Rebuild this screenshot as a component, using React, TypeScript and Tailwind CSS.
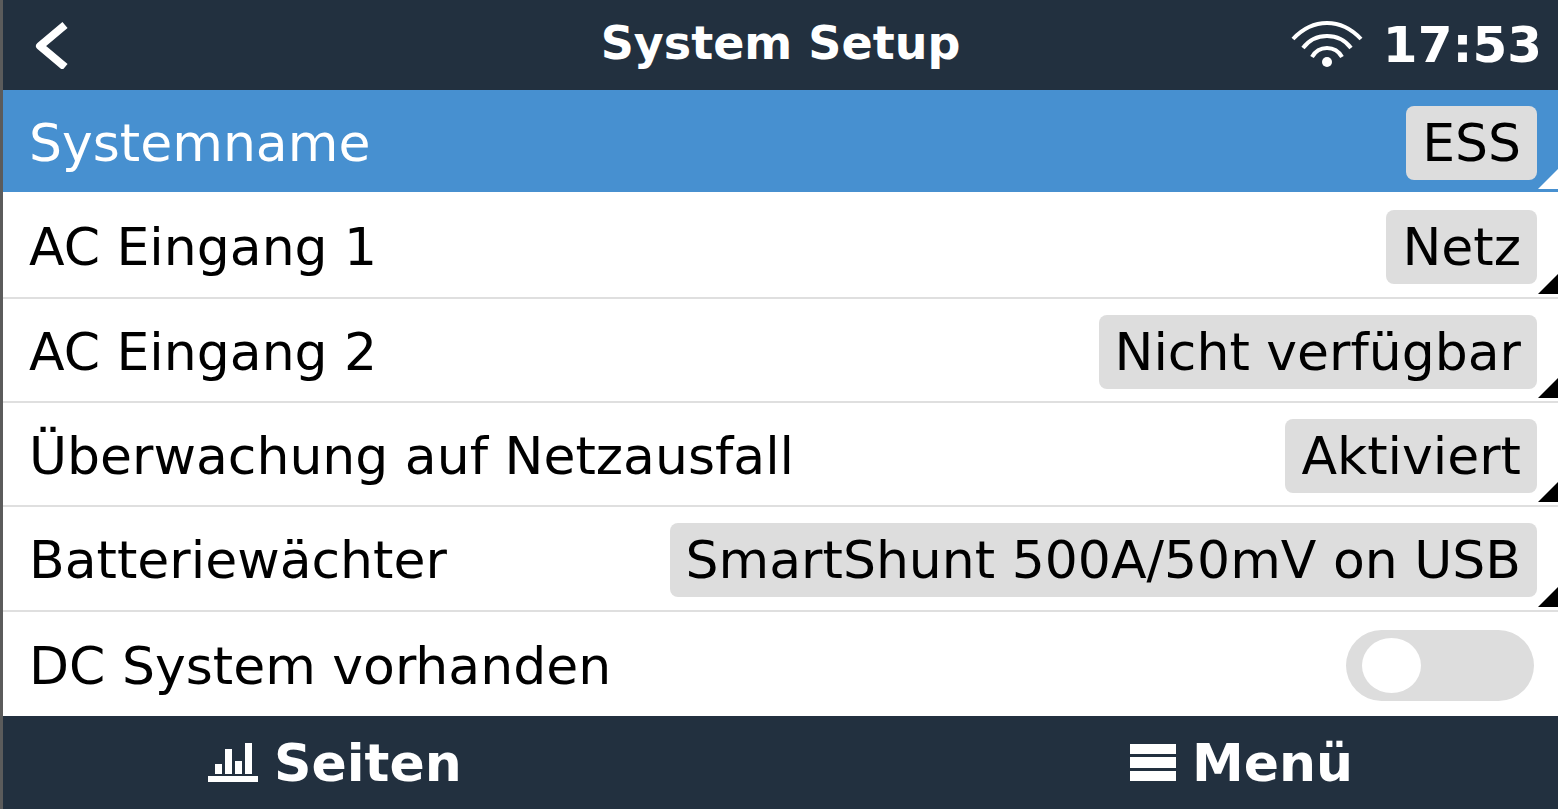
import { useState } from 'react'
import clsx from 'clsx'

type Item = { label: string; value: string }

const items: Item[] = [
  { label: 'Systemname', value: 'ESS' },
  { label: 'AC Eingang 1', value: 'Netz' },
  { label: 'AC Eingang 2', value: 'Nicht verfügbar' },
  { label: 'Überwachung auf Netzausfall', value: 'Aktiviert' },
  { label: 'Batteriewächter', value: 'SmartShunt 500A/50mV on USB' },
]

function BackIcon() {
  return (
    <svg width="38" height="48" viewBox="0 0 38 48" fill="none" stroke="white" strokeWidth="8">
      <path d="M34 4 L9 25 L34 46" strokeLinejoin="round" />
    </svg>
  )
}

function WifiIcon() {
  return (
    <svg width="72" height="48" viewBox="0 0 72 48" fill="none" stroke="white" strokeWidth="4">
      <path d="M2 18 Q17 2 36 2 Q55 2 70 18" />
      <path d="M12 27 Q21 15 36 15 Q51 15 60 27" />
      <path d="M21 36 Q26 27 36 27 Q46 27 51 36" />
      <circle cx="36" cy="41" r="5" fill="white" stroke="none" />
    </svg>
  )
}

function PagesIcon() {
  return (
    <svg width="50" height="40" viewBox="0 0 50 40" fill="white">
      <rect x="7" y="21" width="7" height="10" />
      <rect x="17" y="6" width="7" height="25" />
      <rect x="27" y="18" width="7" height="13" />
      <rect x="37" y="0" width="7" height="31" />
      <rect x="0" y="33" width="50" height="6" />
    </svg>
  )
}

function MenuIcon() {
  return (
    <svg width="46" height="37" viewBox="0 0 46 37" fill="white">
      <rect y="0" width="46" height="10" />
      <rect y="13" width="46" height="11" />
      <rect y="27" width="46" height="10" />
    </svg>
  )
}

function MenuRow({ item, active, onSelect }: { item: Item; active: boolean; onSelect: () => void }) {
  return (
    <button
      type="button"
      onClick={onSelect}
      className={clsx(
        'relative flex items-center justify-between border-b-2 pt-1 pl-[26px] pr-[21px] text-left',
        active ? 'border-white bg-[#4790d0] text-white' : 'border-[#dfdfdf] bg-white text-black'
      )}
    >
      <span>{item.label}</span>
      <span className="flex h-[74px] items-center rounded-lg bg-[#dddddd] px-4 text-black">{item.value}</span>
      <svg
        className={clsx('absolute right-0 bottom-[3px]', active ? 'text-white' : 'text-black')}
        width="20" height="20" viewBox="0 0 20 20" fill="currentColor"
      >
        <path d="M0 20 L20 0 V20 Z" />
      </svg>
    </button>
  )
}

export default function App() {
  const [selected, setSelected] = useState(0)
  const [dcSystem, setDcSystem] = useState(false)

  return (
    <div className="flex min-h-screen flex-col border-l-[3px] border-[#5b5b5b] bg-white font-['DejaVu_Sans',sans-serif] text-[52px] leading-[60px] whitespace-nowrap">
      {/* Status bar */}
      <header className="grid h-[90px] shrink-0 grid-cols-[1fr_auto_1fr] items-center bg-[#22303f] font-bold text-white">
        <button type="button" aria-label="Zurück" className="justify-self-start pl-7">
          <BackIcon />
        </button>
        <h1 className="pb-1 text-[46px]">System Setup</h1>
        <div className="flex items-center gap-5 justify-self-end pr-4 text-[50px]">
          <WifiIcon />
          <time>17:53</time>
        </div>
      </header>

      {/* Settings list */}
      <main className="grid flex-1 auto-rows-fr">
        {items.map((item, i) => (
          <MenuRow key={item.label} item={item} active={i === selected} onSelect={() => setSelected(i)} />
        ))}
        <div className="flex items-center justify-between pt-1 pr-6 pl-[26px]">
          <label htmlFor="dc-system">DC System vorhanden</label>
          <input
            id="dc-system"
            type="checkbox"
            checked={dcSystem}
            onChange={e => setDcSystem(e.target.checked)}
            className="flex h-[71px] w-[188px] appearance-none items-center rounded-full bg-[#dddddd] px-4 before:h-[55px] before:w-[59px] before:rounded-[50%] before:bg-white checked:justify-end checked:bg-[#4790d0]"
          />
        </div>
      </main>

      {/* Bottom bar */}
      <footer className="flex h-[93px] shrink-0 items-center justify-between bg-[#22303f] px-[205px] font-bold text-white">
        <button type="button" className="flex items-center gap-4">
          <PagesIcon />
          Seiten
        </button>
        <button type="button" className="flex items-center gap-4">
          <MenuIcon />
          Menü
        </button>
      </footer>
    </div>
  )
}
